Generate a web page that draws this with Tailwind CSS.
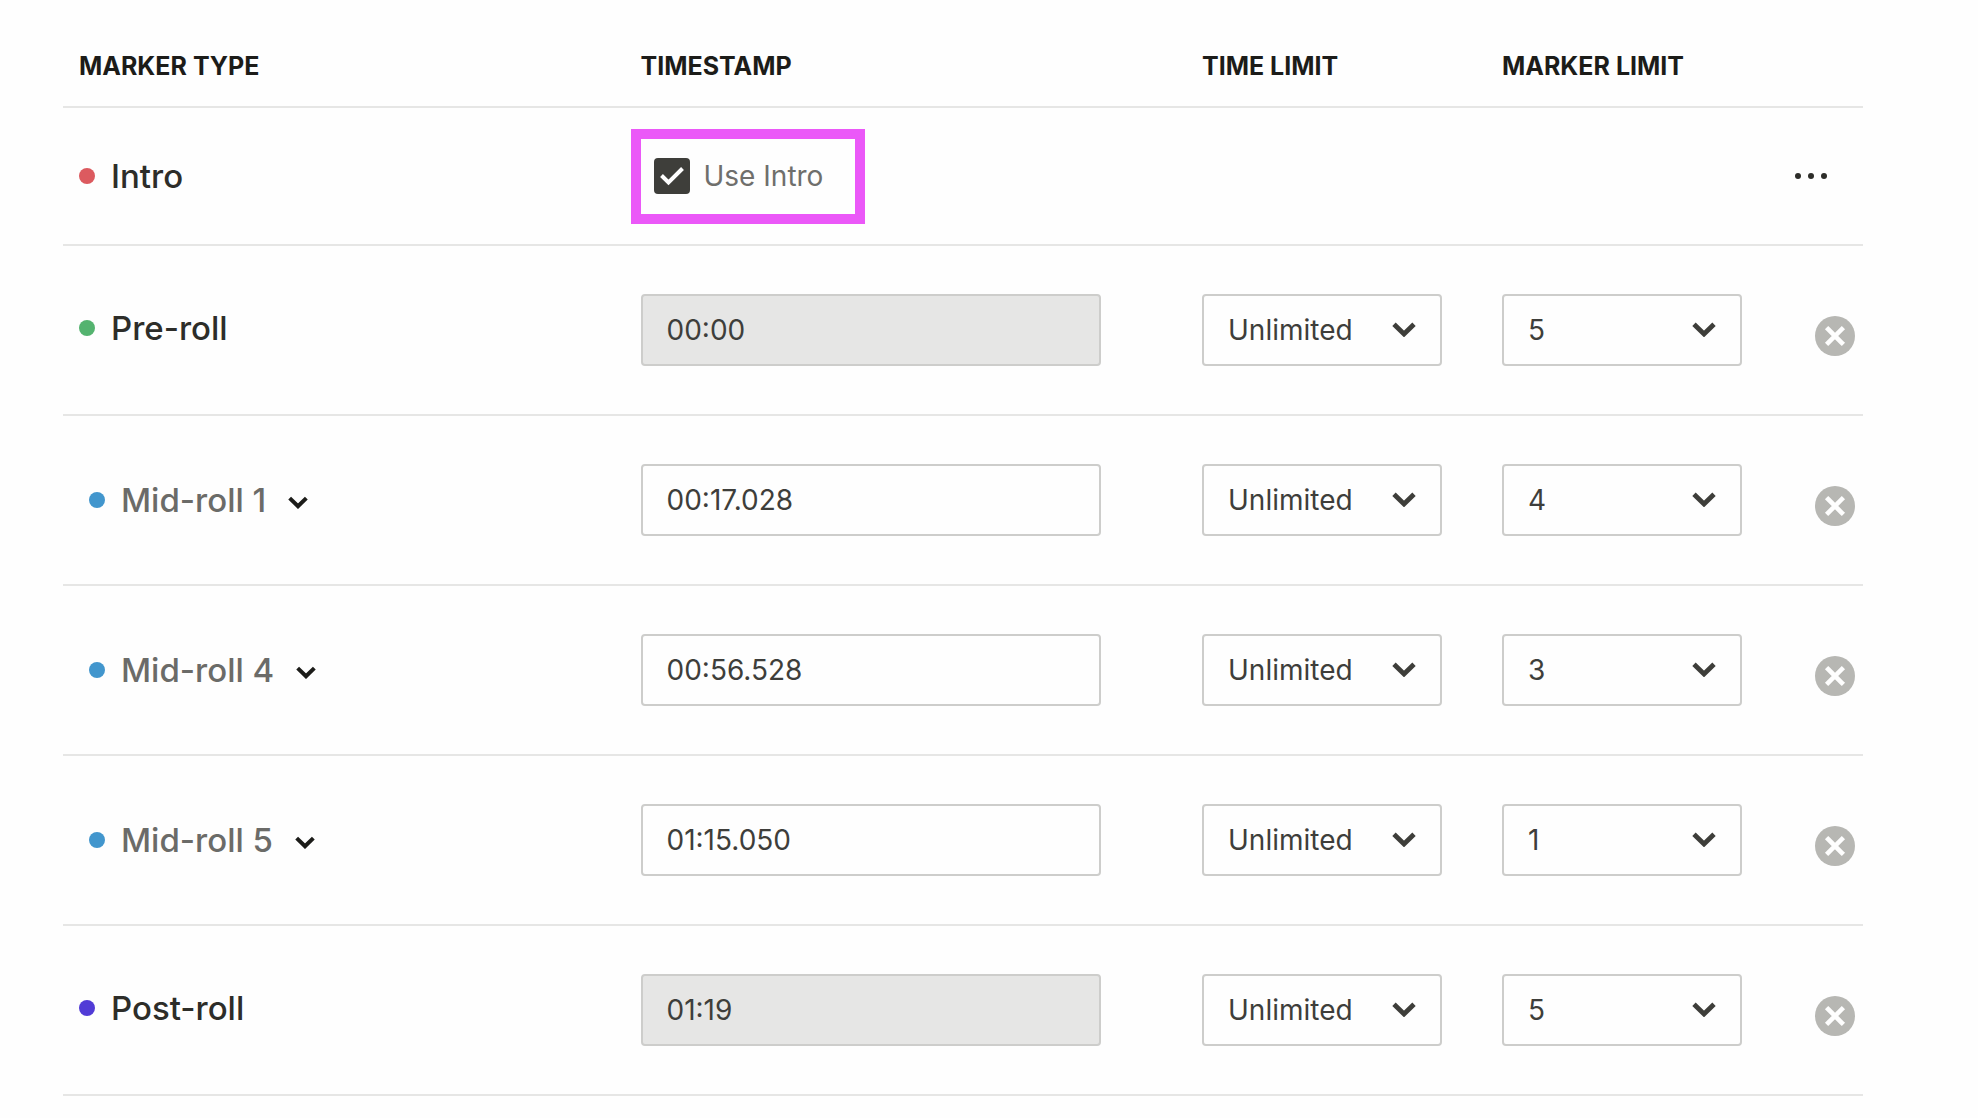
<!DOCTYPE html>
<html lang="en">
<head>
<meta charset="utf-8">
<meta name="viewport" content="width=device-width, initial-scale=1">
<title>Markers</title>
<script src="https://cdn.jsdelivr.net/npm/@tailwindcss/browser@4"></script>
</head>
<body class="bg-[#fefefe] font-[Inter,sans-serif] text-[#2d2d29]">
<svg class="hidden" aria-hidden="true">
  <symbol id="chevron" viewBox="0 0 24 15"><path d="M2 2.200 12 12l10-9.800" fill="none" stroke="currentColor" stroke-width="4.800"/></symbol>
  <symbol id="remove" viewBox="0 0 40 40"><circle cx="20" cy="20" r="20" fill="#b7b7b3"/><path d="M13.200 13.200l13.600 13.600M26.800 13.200 13.200 26.800" stroke="#fefefe" stroke-width="4.600" stroke-linecap="square" fill="none"/></symbol>
</svg>
<main class="pl-[63px] pr-[115px]">
  <table class="w-full table-fixed border-collapse text-left">
    <colgroup><col><col><col class="w-[300px]"><col class="w-[272px]"><col class="w-[105px]"></colgroup>
    <thead>
      <tr class="h-[107px] border-b-2 border-[#e6e6e5] text-[25px] font-bold text-[#1c1c19]">
        <th scope="col" class="px-4 pt-7">MARKER TYPE</th>
        <th scope="col" class="px-4 pt-7">TIMESTAMP</th>
        <th scope="col" class="px-4 pt-7">TIME LIMIT</th>
        <th scope="col" class="px-4 pt-7">MARKER LIMIT</th>
        <td></td>
      </tr>
    </thead>
    <tbody id="rows">
      <tr class="h-[138px] border-b-2 border-[#e6e6e5]">
        <td class="px-4"><div class="flex items-center gap-4 text-[33px] font-medium leading-10"><span class="size-4 rounded-full bg-[#dc5a5f]"></span>Intro</div></td>
        <td class="pl-1.5">
          <label class="flex h-[95px] w-[234px] items-center gap-3.5 border-10 border-[#eb58f8] pl-[13px] text-[28px] text-[#6f6f6c]">
            <span class="grid size-9 shrink-0">
              <input type="checkbox" checked class="col-start-1 row-start-1 size-9 appearance-none rounded bg-[#3e3e3a]">
              <svg class="pointer-events-none col-start-1 row-start-1 size-9" viewBox="0 0 36 36"><path d="M7.500 17.500l7 7L28.500 10.500" fill="none" stroke="#fefefe" stroke-width="4"/></svg>
            </span>
            <span class="whitespace-nowrap">Use Intro</span>
          </label>
        </td>
        <td></td>
        <td></td>
        <td class="pr-8"><button type="button" aria-label="More options" class="ml-auto flex size-10 items-center justify-center"><svg class="h-2 w-9" viewBox="0 0 36 8" fill="#2d2d29"><circle cx="5" cy="4" r="3"/><circle cx="18" cy="4" r="3"/><circle cx="31" cy="4" r="3"/></svg></button></td>
      </tr>
    </tbody>
  </table>
</main>
<script>
const markers = [
  { name: 'Pre-roll', dot: 'bg-[#54b36f]', time: '00:00', limit: '5', fixed: true },
  { name: 'Mid-roll 1', dot: 'bg-[#4296cd]', time: '00:17.028', limit: '4' },
  { name: 'Mid-roll 4', dot: 'bg-[#4296cd]', time: '00:56.528', limit: '3' },
  { name: 'Mid-roll 5', dot: 'bg-[#4296cd]', time: '01:15.050', limit: '1' },
  { name: 'Post-roll', dot: 'bg-[#513bd6]', time: '01:19', limit: '5', fixed: true },
];
const select = (label, options, value) => `
  <div class="relative w-60">
    <select aria-label="${label}" class="h-[72px] w-full appearance-none rounded border-2 border-[#cdcdcb] bg-[#fefefe] pl-6 pr-14 text-[28px] text-[#3e3e3b]">
      ${options.map(o => `<option${o === value ? ' selected' : ''}>${o}</option>`).join('')}
    </select>
    <svg class="pointer-events-none absolute right-[26px] top-7 h-[15px] w-6 text-[#3e3e3a]"><use href="#chevron"/></svg>
  </div>`;
document.getElementById('rows').insertAdjacentHTML('beforeend', markers.map(m => `
  <tr class="h-[170px] border-b-2 border-[#e6e6e5]">
    <td class="${m.fixed ? 'pl-4 pb-1' : 'pl-[26px]'}">
      <div class="flex items-center gap-4 text-[33px] font-medium leading-10 ${m.fixed ? '' : 'text-[#6b6b68]'}">
        <span class="size-4 rounded-full ${m.dot}"></span>${m.name}
        ${m.fixed ? '' : `<button type="button" aria-label="${m.name} options" class="ml-1.5 mt-1 text-[#1c1c19]"><svg class="h-[13px] w-5"><use href="#chevron"/></svg></button>`}
      </div>
    </td>
    <td class="px-4"><input type="text" aria-label="${m.name} timestamp" value="${m.time}" ${m.fixed ? 'disabled' : ''} class="block h-[72px] w-[460px] rounded border-2 border-[#cdcdcb] px-6 text-[28px] text-[#3e3e3b] ${m.fixed ? 'bg-[#e6e6e5]' : 'bg-[#fefefe]'}"></td>
    <td class="px-4">${select(m.name + ' time limit', ['Unlimited'], 'Unlimited')}</td>
    <td class="pl-4">${select(m.name + ' marker limit', ['1', '2', '3', '4', '5'], m.limit)}</td>
    <td class="pr-2 pt-3"><button type="button" aria-label="Remove ${m.name}" class="ml-auto block size-10"><svg class="size-10"><use href="#remove"/></svg></button></td>
  </tr>`).join(''));
</script>
</body>
</html>
